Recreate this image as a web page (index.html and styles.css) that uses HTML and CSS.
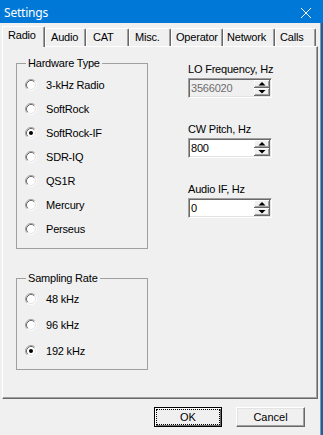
FILE: index.html
```html
<!DOCTYPE html>
<html>
<head>
<meta charset="utf-8">
<link rel="stylesheet" href="styles.css">
</head>
<body>
<svg class="defs" width="0" height="0" aria-hidden="true">
  <symbol id="radio" viewBox="0 0 12 12">
    <circle cx="6" cy="6" r="5" fill="#fff"/>
    <path d="M2.11 9.89A5.5 5.5 0 0 1 9.89 2.11" fill="none" stroke="#a0a0a0"/>
    <path d="M9.89 2.11A5.5 5.5 0 0 1 2.11 9.89" fill="none" stroke="#ffffff"/>
    <path d="M2.82 9.18A4.5 4.5 0 0 1 9.18 2.82" fill="none" stroke="#696969"/>
    <path d="M9.18 2.82A4.5 4.5 0 0 1 2.82 9.18" fill="none" stroke="#e3e3e3"/>
  </symbol>
  <symbol id="updown" viewBox="0 0 16 16">
    <rect width="16" height="16" fill="#f0f0f0"/>
    <path d="M0 0.5H15M0.5 0V7" stroke="#fff"/>
    <path d="M1 6.5H15M14.5 1V7" stroke="#a0a0a0"/>
    <path d="M0 7.5H16M15.5 0V8" stroke="#696969"/>
    <path d="M0 8.5H15M0.5 8V15" stroke="#fff"/>
    <path d="M1 14.5H15M14.5 9V15" stroke="#a0a0a0"/>
    <path d="M0 15.5H16M15.5 8V16" stroke="#696969"/>
    <polygon points="4.5,5.5 11.5,5.5 8,2" fill="#000"/>
    <polygon points="4.5,10 11.5,10 8,13.5" fill="#000"/>
  </symbol>
</svg>
<div class="titlebar">
  <span class="title">Settings</span>
  <svg class="close" viewBox="0 0 10 10" width="10" height="10"><path d="M0 0L10 10M10 0L0 10" stroke="#fff" stroke-width="1"/></svg>
</div>
<div class="main">
  <div class="client">
    <div class="tabs">
      <div class="tab active">Radio</div>
      <div class="tab">Audio</div>
      <div class="tab">CAT</div>
      <div class="tab">Misc.</div>
      <div class="tab">Operator</div>
      <div class="tab">Network</div>
      <div class="tab">Calls</div>
    </div>
    <div class="panel">
      <div class="col-left">
        <fieldset class="group hw">
          <legend>Hardware Type</legend>
          <div class="list">
            <div class="radio"><svg class="rb"><use href="#radio"/></svg><span>3-kHz Radio</span></div>
            <div class="radio"><svg class="rb"><use href="#radio"/></svg><span>SoftRock</span></div>
            <div class="radio"><svg class="rb"><use href="#radio"/><circle cx="6" cy="6" r="2" fill="#000"/></svg><span>SoftRock-IF</span></div>
            <div class="radio"><svg class="rb"><use href="#radio"/></svg><span>SDR-IQ</span></div>
            <div class="radio"><svg class="rb"><use href="#radio"/></svg><span>QS1R</span></div>
            <div class="radio"><svg class="rb"><use href="#radio"/></svg><span>Mercury</span></div>
            <div class="radio"><svg class="rb"><use href="#radio"/></svg><span>Perseus</span></div>
          </div>
        </fieldset>
        <fieldset class="group sr">
          <legend>Sampling Rate</legend>
          <div class="list">
            <div class="radio"><svg class="rb"><use href="#radio"/></svg><span>48 kHz</span></div>
            <div class="radio"><svg class="rb"><use href="#radio"/></svg><span>96 kHz</span></div>
            <div class="radio"><svg class="rb"><use href="#radio"/><circle cx="6" cy="6" r="2" fill="#000"/></svg><span>192 kHz</span></div>
          </div>
        </fieldset>
      </div>
      <div class="col-right">
        <div class="field">
          <div class="label">LO Frequency, Hz</div>
          <div class="spin disabled"><span class="value">3566020</span><svg class="ud"><use href="#updown"/></svg></div>
        </div>
        <div class="field">
          <div class="label">CW Pitch, Hz</div>
          <div class="spin"><span class="value">800</span><svg class="ud"><use href="#updown"/></svg></div>
        </div>
        <div class="field">
          <div class="label">Audio IF, Hz</div>
          <div class="spin"><span class="value">0</span><svg class="ud"><use href="#updown"/></svg></div>
        </div>
      </div>
    </div>
    <div class="buttons">
      <button class="btn default"><span class="focus">OK</span></button>
      <button class="btn cancel">Cancel</button>
    </div>
  </div>
  <div class="edge"></div>
</div>
</body>
</html>
```
FILE: styles.css
```css
* { box-sizing: border-box; }
html, body { margin: 0; padding: 0; }
body {
  width: 323px;
  height: 435px;
  overflow: hidden;
  display: flex;
  flex-direction: column;
  background: #f0f0f0;
  font-family: "Liberation Sans", Arial, sans-serif;
  font-size: 11px;
  line-height: 13px;
  letter-spacing: -0.2px;
  color: #000;
}
.defs { display: block; width: 0; height: 0; overflow: hidden; }

.titlebar {
  height: 23px;
  flex: none;
  background: #0078d7;
  color: #fff;
  display: flex;
  align-items: center;
  justify-content: space-between;
  padding: 2px 12px 0 4px;
  font-family: "Noto Sans", "Open Sans", sans-serif;
  font-size: 12px;
  letter-spacing: -0.2px;
}
.close { display: block; }

.main { flex: 1; display: flex; }
.client {
  width: 320px;
  display: flex;
  flex-direction: column;
  padding: 3px 0 0 2px;
  background: #f0f0f0;
}
.edge {
  width: 3px;
  background: linear-gradient(to right, #6e9cc6 0 1px, #2a5d8c 1px);
}

.tabs {
  height: 20px;
  display: flex;
  align-items: flex-end;
  position: relative;
  z-index: 1;
}
.tab {
  height: 18px;
  padding: 2px 0 0 5px;
  background: #f0f0f0;
  border-top: 1px solid #fff;
  border-left: 1px solid #fff;
  border-right: 1px solid #696969;
  border-radius: 2px 2px 0 0;
  box-shadow: inset -1px 0 #a0a0a0;
  white-space: nowrap;
  overflow: hidden;
}
.tab.active {
  height: 21px;
  margin-bottom: -1px;
  padding-top: 2px;
}
.tab:nth-child(1) { width: 43px; }
.tab:nth-child(2) { width: 41px; }
.tab:nth-child(3) { width: 43px; padding-left: 6px; }
.tab:nth-child(4) { width: 42px; }
.tab:nth-child(5) { width: 52px; padding-left: 4px; }
.tab:nth-child(6) { width: 52px; padding-left: 3px; }
.tab:nth-child(7) { width: 41px; padding-left: 4px; }

.panel {
  width: 316px;
  height: 353px;
  border: 1px solid;
  border-color: #fff #696969 #696969 #fff;
  box-shadow: inset -1px -1px #a0a0a0;
  display: grid;
  grid-template-columns: 132px 84px;
  column-gap: 40px;
  align-items: start;
  padding: 10px 0 0 13px;
}

.col-left { display: flex; flex-direction: column; }
.group {
  margin: 0;
  padding: 0;
  min-width: 0;
  width: 132px;
  border: 1px solid #a0a0a0;
}
.group legend {
  margin-left: 9px;
  padding: 0 2px;
  line-height: 13px;
}
.hw .list { padding: 3px 0 7px; }
.sr { margin-top: 23px; }
.sr .list { padding: 1px 0 5px; }
.radio {
  display: flex;
  align-items: center;
  height: 24px;
  padding-left: 8px;
  gap: 9px;
}
.sr .radio { height: 26px; }
.rb { width: 12px; height: 12px; flex: none; }

.col-right {
  display: flex;
  flex-direction: column;
  gap: 25px;
  padding-top: 6px;
}
.field { display: flex; flex-direction: column; gap: 2px; }
.label { white-space: nowrap; }
.spin {
  width: 84px;
  height: 20px;
  display: flex;
  align-items: center;
  justify-content: space-between;
  background: #fff;
  border: 1px solid;
  border-color: #a0a0a0 #fff #fff #a0a0a0;
  box-shadow: inset 1px 1px #696969, inset -1px -1px #e3e3e3;
  padding: 1px 1px 1px 2px;
}
.spin.disabled { background: #f0f0f0; color: #6d6d6d; }
.ud { width: 16px; height: 16px; flex: none; display: block; }

.buttons {
  display: flex;
  justify-content: flex-end;
  gap: 14px;
  padding: 8px 15px 0 0;
}
.btn {
  height: 20px;
  margin: 0;
  padding: 0;
  font: inherit;
  color: #000;
  background: #f0f0f0;
  display: flex;
  align-items: center;
  justify-content: center;
}
.btn.default {
  width: 68px;
  border: 1px solid #000;
  box-shadow: inset 1px 1px #fff, inset -1px -1px #696969;
  padding: 1px;
}
.btn.default .focus {
  flex: 1;
  align-self: stretch;
  display: flex;
  align-items: center;
  justify-content: center;
  border: 1px dotted #000;
}
.btn.cancel {
  width: 69px;
  border: 1px solid;
  border-color: #fff #696969 #696969 #fff;
  box-shadow: inset -1px -1px #a0a0a0, inset 1px 1px #e3e3e3;
}
```
